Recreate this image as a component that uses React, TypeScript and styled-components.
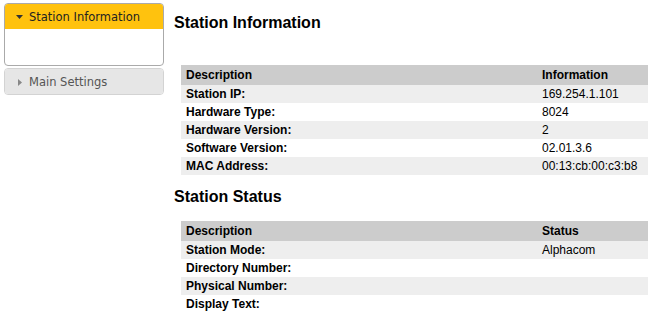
import React from "react";
import styled, { createGlobalStyle } from "styled-components";

const Global = createGlobalStyle`
  html, body { margin: 0; padding: 0; background: #fff; }
  body { font-family: "Liberation Sans", Arial, sans-serif; color: #000; }
`;

const Page = styled.div`
  display: flex;
  align-items: flex-start;
  width: 648px;
`;

const Sidebar = styled.div`
  width: 160px;
  margin: 3px 0 0 4px;
  display: flex;
  flex-direction: column;
  gap: 2px;
  font-family: "DejaVu Sans", Verdana, sans-serif;
  font-size: 11.5px;
`;

const Panel = styled.div<{ $open?: boolean }>`
  border: 1px solid ${(p) => (p.$open ? "#aaaaaa" : "#d3d3d3")};
  border-radius: 4px;
  overflow: hidden;
  background: ${(p) => (p.$open ? "#ffffff" : "#e6e6e6")};
`;

const PanelHeader = styled.div<{ $open?: boolean }>`
  display: flex;
  align-items: center;
  height: 25px;
  padding-top: 1px;
  box-sizing: border-box;
  padding-left: ${(p) => (p.$open ? "11px" : "13px")};
  gap: ${(p) => (p.$open ? "6px" : "7px")};
  background: ${(p) => (p.$open ? "#ffc20e" : "#e6e6e6")};
  color: ${(p) => (p.$open ? "#222222" : "#555555")};
`;

const PanelBody = styled.div`
  height: 36px;
`;

const Main = styled.div`
  flex: 1;
  margin-left: 10px;
  display: flex;
  flex-direction: column;
`;

const Heading = styled.h2<{ $first?: boolean }>`
  font-size: 16px;
  font-weight: bold;
  line-height: 18px;
  margin: ${(p) => (p.$first ? "14px 0 33px 0" : "13px 0 15px 0")};
`;

const Table = styled.table`
  margin-left: 7px;
  width: calc(100% - 7px);
  border-collapse: collapse;
  font-size: 12px;
`;

const Th = styled.th<{ $w?: number }>`
  background: #cccccc;
  height: 20px;
  padding: 0 5px;
  text-align: left;
  font-weight: bold;
  ${(p) => (p.$w ? `width: ${p.$w}px;` : "")}
`;

const Tr = styled.tr<{ $alt?: boolean }>`
  background: ${(p) => (p.$alt ? "#eeeeee" : "#ffffff")};
`;

const Label = styled.td`
  height: 18px;
  padding: 0 5px;
  font-weight: bold;
`;

const Value = styled.td`
  height: 18px;
  padding: 0 5px;
`;

const Down = () => (
  <svg width="7" height="4" viewBox="0 0 7 4">
    <polygon points="0,0 7,0 3.5,4" fill="#333" />
  </svg>
);

const Right = () => (
  <svg width="4" height="7" viewBox="0 0 4 7">
    <polygon points="0,0 4,3.5 0,7" fill="#888" />
  </svg>
);

const info = [
  ["Station IP:", "169.254.1.101"],
  ["Hardware Type:", "8024"],
  ["Hardware Version:", "2"],
  ["Software Version:", "02.01.3.6"],
  ["MAC Address:", "00:13:cb:00:c3:b8"],
];

const status = [
  ["Station Mode:", "Alphacom"],
  ["Directory Number:", ""],
  ["Physical Number:", ""],
  ["Display Text:", ""],
];

const DataTable = ({ col, rows }: { col: string; rows: string[][] }) => (
  <Table>
    <thead>
      <tr>
        <Th $w={346}>Description</Th>
        <Th>{col}</Th>
      </tr>
    </thead>
    <tbody>
      {rows.map((r, i) => (
        <Tr key={r[0]} $alt={i % 2 === 0}>
          <Label>{r[0]}</Label>
          <Value>{r[1]}</Value>
        </Tr>
      ))}
    </tbody>
  </Table>
);

export default function App() {
  return (
    <>
      <Global />
      <Page>
        <Sidebar>
          <Panel $open>
            <PanelHeader $open>
              <Down />
              <span>Station Information</span>
            </PanelHeader>
            <PanelBody />
          </Panel>
          <Panel>
            <PanelHeader>
              <Right />
              <span>Main Settings</span>
            </PanelHeader>
          </Panel>
        </Sidebar>
        <Main>
          <Heading $first>Station Information</Heading>
          <DataTable col="Information" rows={info} />
          <Heading>Station Status</Heading>
          <DataTable col="Status" rows={status} />
        </Main>
      </Page>
    </>
  );
}
